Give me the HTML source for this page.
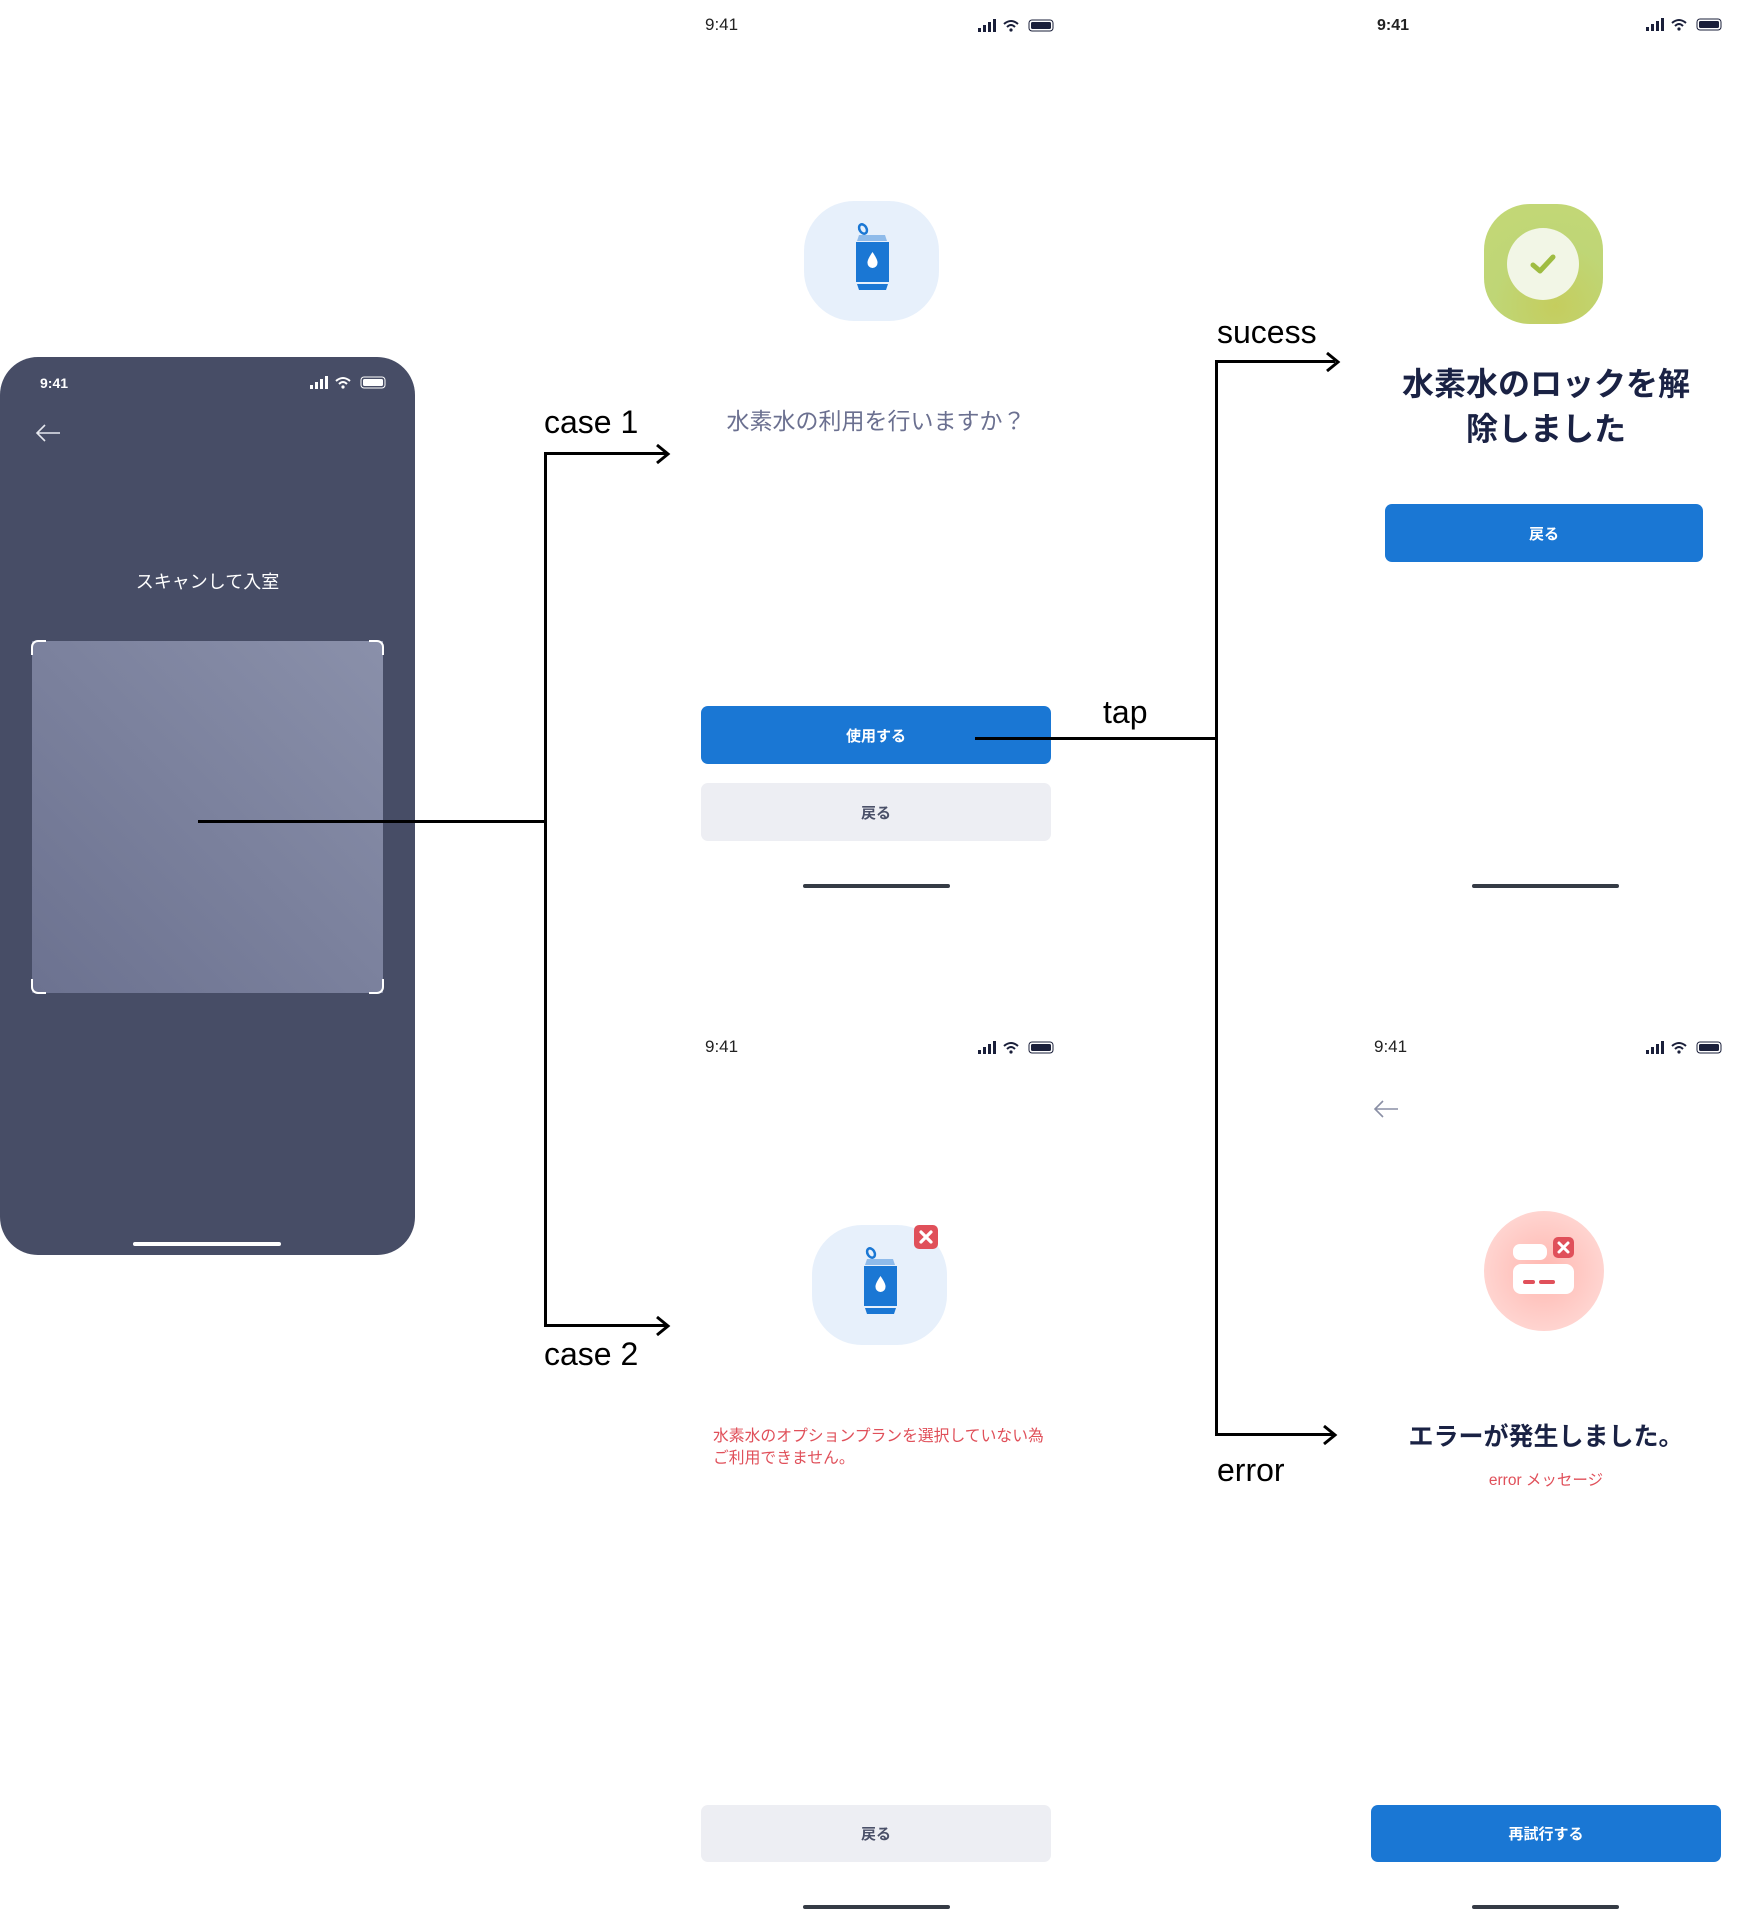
<!DOCTYPE html>
<html><head><meta charset="utf-8">
<style>
*{margin:0;padding:0;box-sizing:border-box}
body{width:1750px;height:1916px;background:#fff;position:relative;overflow:hidden;font-family:"Liberation Sans","Noto Sans CJK JP",sans-serif}
.a{position:absolute}
.t{position:absolute;white-space:nowrap}
.btn{position:absolute;border-radius:7px;display:flex;align-items:center;justify-content:center;font-size:15px;font-weight:bold}
.blue{background:#1a77d4;color:#fff}
.gray{background:#edeef3;color:#4a5068}
.home{position:absolute;width:147px;height:4px;border-radius:2px;background:#353b45}
.ln{position:absolute;background:#000}
.lbl{position:absolute;font-size:32px;color:#000;white-space:nowrap;font-family:"Liberation Sans",sans-serif}
</style></head><body>

<!-- Left dark phone -->
<div class="a" style="left:0;top:357px;width:415px;height:898px;background:#474d66;border-radius:38px"></div>
<div class="t" style="left:40px;top:375px;font-size:14px;font-weight:bold;color:#fff">9:41</div>
<svg class="a" style="left:310px;top:376px" width="78" height="14" viewBox="0 0 78 14">
<rect x="0" y="9" width="3" height="4" fill="#fff"/><rect x="5" y="6" width="3" height="7" fill="#fff"/><rect x="10" y="3" width="3" height="10" fill="#fff"/><rect x="15" y="0" width="3" height="13" fill="#fff"/>
<path d="M26 5 Q33 -1 40 5" stroke="#fff" stroke-width="2" fill="none"/><path d="M29 8 Q33 4 37 8" stroke="#fff" stroke-width="2" fill="none"/><circle cx="33" cy="11" r="1.6" fill="#fff"/>
<rect x="51" y="1" width="24" height="11" rx="3" fill="none" stroke="#fff" stroke-width="1"/><rect x="53" y="3" width="20" height="7" rx="1.5" fill="#fff"/>
</svg>
<svg class="a" style="left:34px;top:423px" width="28" height="20" viewBox="0 0 28 20"><path d="M26 10H3M11 2L3 10L11 18" stroke="#e6e8ef" stroke-width="1.6" fill="none"/></svg>
<div class="t" style="left:0;width:415px;text-align:center;top:568px;font-size:18px;color:#fff">スキャンして入室</div>
<div class="a" style="left:32px;top:641px;width:351px;height:352px;background:linear-gradient(225deg,#8a90aa,#6c7290);"></div>
<svg class="a" style="left:30px;top:639px" width="355" height="356" viewBox="0 0 355 356">
<g stroke="#fff" stroke-width="2" fill="none"><path d="M2 16V8a6 6 0 0 1 6-6H16"/><path d="M339 2H347a6 6 0 0 1 6 6V16"/><path d="M2 340V348a6 6 0 0 0 6 6H16"/><path d="M339 354H347a6 6 0 0 0 6-6V340"/></g></svg>
<div class="a" style="left:133px;top:1242px;width:148px;height:4px;border-radius:2px;background:#fff"></div>

<!-- connector lines -->
<div class="ln" style="left:198px;top:820px;width:348px;height:3px"></div>
<div class="ln" style="left:544px;top:452px;width:3px;height:875px"></div>
<div class="ln" style="left:544px;top:452px;width:122px;height:3px"></div>
<div class="ln" style="left:544px;top:1324px;width:122px;height:3px"></div>
<svg class="a" style="left:655px;top:443px" width="16" height="22"><path d="M2 2L13 11L2 20" stroke="#000" stroke-width="3" fill="none"/></svg>
<svg class="a" style="left:655px;top:1315px" width="16" height="22"><path d="M2 2L13 11L2 20" stroke="#000" stroke-width="3" fill="none"/></svg>
<div class="lbl" style="left:544px;top:404px">case 1</div>
<div class="lbl" style="left:544px;top:1336px">case 2</div>

<div class="ln" style="left:975px;top:737px;width:243px;height:3px"></div>
<div class="ln" style="left:1215px;top:360px;width:3px;height:1076px"></div>
<div class="ln" style="left:1215px;top:360px;width:120px;height:3px"></div>
<div class="ln" style="left:1215px;top:1433px;width:120px;height:3px"></div>
<svg class="a" style="left:1325px;top:351px" width="16" height="22"><path d="M2 2L13 11L2 20" stroke="#000" stroke-width="3" fill="none"/></svg>
<svg class="a" style="left:1322px;top:1424px" width="16" height="22"><path d="M2 2L13 11L2 20" stroke="#000" stroke-width="3" fill="none"/></svg>
<div class="lbl" style="left:1103px;top:694px">tap</div>
<div class="lbl" style="left:1217px;top:314px">sucess</div>
<div class="lbl" style="left:1217px;top:1452px">error</div>

<!-- status bars for white phones -->
<div class="t" style="left:705px;top:15px;font-size:17px;color:#222">9:41</div>
<div class="t" style="left:1377px;top:17px;font-size:16px;font-weight:bold;color:#222">9:41</div>
<div class="t" style="left:705px;top:1037px;font-size:17px;color:#222">9:41</div>
<div class="t" style="left:1374px;top:1037px;font-size:17px;color:#222">9:41</div>
<svg class="a" style="left:978px;top:19px" width="80" height="14" viewBox="0 0 80 14"><g fill="#1a1f3a"><rect x="0" y="9" width="3" height="4"/><rect x="5" y="6" width="3" height="7"/><rect x="10" y="3" width="3" height="10"/><rect x="15" y="0" width="3" height="13"/><circle cx="33" cy="11" r="1.6"/><rect x="53" y="3" width="20" height="7" rx="1.5"/></g><g stroke="#1a1f3a" stroke-width="2" fill="none"><path d="M26 5 Q33 -1 40 5"/><path d="M29 8 Q33 4 37 8"/></g><rect x="51" y="1" width="24" height="11" rx="3" fill="none" stroke="#1a1f3a" stroke-width="1"/></svg>
<svg class="a" style="left:1646px;top:18px" width="80" height="14" viewBox="0 0 80 14"><g fill="#1a1f3a"><rect x="0" y="9" width="3" height="4"/><rect x="5" y="6" width="3" height="7"/><rect x="10" y="3" width="3" height="10"/><rect x="15" y="0" width="3" height="13"/><circle cx="33" cy="11" r="1.6"/><rect x="53" y="3" width="20" height="7" rx="1.5"/></g><g stroke="#1a1f3a" stroke-width="2" fill="none"><path d="M26 5 Q33 -1 40 5"/><path d="M29 8 Q33 4 37 8"/></g><rect x="51" y="1" width="24" height="11" rx="3" fill="none" stroke="#1a1f3a" stroke-width="1"/></svg>
<svg class="a" style="left:978px;top:1041px" width="80" height="14" viewBox="0 0 80 14"><g fill="#1a1f3a"><rect x="0" y="9" width="3" height="4"/><rect x="5" y="6" width="3" height="7"/><rect x="10" y="3" width="3" height="10"/><rect x="15" y="0" width="3" height="13"/><circle cx="33" cy="11" r="1.6"/><rect x="53" y="3" width="20" height="7" rx="1.5"/></g><g stroke="#1a1f3a" stroke-width="2" fill="none"><path d="M26 5 Q33 -1 40 5"/><path d="M29 8 Q33 4 37 8"/></g><rect x="51" y="1" width="24" height="11" rx="3" fill="none" stroke="#1a1f3a" stroke-width="1"/></svg>
<svg class="a" style="left:1646px;top:1041px" width="80" height="14" viewBox="0 0 80 14"><g fill="#1a1f3a"><rect x="0" y="9" width="3" height="4"/><rect x="5" y="6" width="3" height="7"/><rect x="10" y="3" width="3" height="10"/><rect x="15" y="0" width="3" height="13"/><circle cx="33" cy="11" r="1.6"/><rect x="53" y="3" width="20" height="7" rx="1.5"/></g><g stroke="#1a1f3a" stroke-width="2" fill="none"><path d="M26 5 Q33 -1 40 5"/><path d="M29 8 Q33 4 37 8"/></g><rect x="51" y="1" width="24" height="11" rx="3" fill="none" stroke="#1a1f3a" stroke-width="1"/></svg>

<!-- Phone 2 top: confirm -->
<div class="a" style="left:804px;top:201px;width:135px;height:120px;background:#e7f0fb;border-radius:50px"></div>
<svg class="a" style="left:853px;top:222px" width="40" height="70" viewBox="0 0 40 70">
<ellipse cx="10" cy="7" rx="3.5" ry="5" transform="rotate(-30 10 7)" stroke="#1a77d4" stroke-width="2.5" fill="none"/>
<path d="M6 13H32L34 19H4Z" fill="#8fbbea"/><rect x="3" y="20" width="33" height="40" fill="#1a77d4"/><path d="M4 62H35L33 68H6Z" fill="#1a77d4"/>
<path d="M19.5 30 Q14 38 14.5 41 A5 5 0 0 0 24.5 41 Q25 38 19.5 30Z" fill="#fff"/></svg>
<div class="t" style="left:701px;width:350px;text-align:center;top:402px;font-size:23px;color:#6b7090">水素水の利用を行いますか？</div>
<div class="btn blue" style="left:701px;top:706px;width:350px;height:58px">使用する</div>
<div class="btn gray" style="left:701px;top:783px;width:350px;height:58px">戻る</div>
<div class="home" style="left:803px;top:884px"></div>
<div class="ln" style="left:975px;top:737px;width:76px;height:3px"></div>

<!-- Phone 3 top: success -->
<div class="a" style="left:1484px;top:204px;width:119px;height:120px;border-radius:46px;background:radial-gradient(circle at 60% 85%,#c5cd5e,#bfd676 50%,#c4d876)"></div>
<div class="a" style="left:1507px;top:228px;width:72px;height:72px;border-radius:50%;background:#f2f6e6"></div>
<svg class="a" style="left:1528px;top:251px" width="30" height="26"><path d="M5 14L12 20L25 6" stroke="#9fbc42" stroke-width="5" stroke-linecap="round" stroke-linejoin="round" fill="none"/></svg>
<div class="t" style="left:1371px;width:350px;text-align:center;top:362px;font-size:32px;font-weight:bold;line-height:45px;color:#1a2244">水素水のロックを解<br>除しました</div>
<div class="btn blue" style="left:1385px;top:504px;width:318px;height:58px">戻る</div>
<div class="home" style="left:1472px;top:884px"></div>

<!-- Phone 2 bottom: not available -->
<div class="a" style="left:812px;top:1225px;width:135px;height:120px;background:#e7f0fb;border-radius:50px"></div>
<svg class="a" style="left:861px;top:1246px" width="40" height="70" viewBox="0 0 40 70">
<ellipse cx="10" cy="7" rx="3.5" ry="5" transform="rotate(-30 10 7)" stroke="#1a77d4" stroke-width="2.5" fill="none"/>
<path d="M6 13H32L34 19H4Z" fill="#8fbbea"/><rect x="3" y="20" width="33" height="40" fill="#1a77d4"/><path d="M4 62H35L33 68H6Z" fill="#1a77d4"/>
<path d="M19.5 30 Q14 38 14.5 41 A5 5 0 0 0 24.5 41 Q25 38 19.5 30Z" fill="#fff"/></svg>
<svg class="a" style="left:914px;top:1225px" width="25" height="25"><rect x="0" y="0" width="24" height="24" rx="5" fill="#e0505a"/><path d="M7 7L17 17M17 7L7 17" stroke="#fff" stroke-width="3.2" stroke-linecap="round"/></svg>
<div class="t" style="left:713px;top:1426px;font-size:15.8px;line-height:22px;color:#e0505a">水素水のオプションプランを選択していない為<br>ご利用できません。</div>
<div class="btn gray" style="left:701px;top:1805px;width:350px;height:57px">戻る</div>
<div class="home" style="left:803px;top:1905px"></div>

<!-- Phone 3 bottom: error -->
<svg class="a" style="left:1372px;top:1098px" width="28" height="22" viewBox="0 0 28 22"><path d="M26 11H3M11 3L3 11L11 19" stroke="#8a8fa5" stroke-width="1.6" fill="none"/></svg>
<div class="a" style="left:1484px;top:1211px;width:120px;height:120px;border-radius:50%;background:radial-gradient(circle at 50% 50%,#ffb7b0,#ffd6d2 75%,#ffdcd8)"></div>
<svg class="a" style="left:1510px;top:1237px" width="70" height="60" viewBox="0 0 70 60">
<rect x="3" y="7" width="34" height="16" rx="7" fill="#fff"/><rect x="3" y="27" width="61" height="30" rx="8" fill="#fff"/>
<rect x="13" y="43" width="12" height="4" rx="2" fill="#e0505a"/><rect x="29" y="43" width="16" height="4" rx="2" fill="#e0505a"/>
<rect x="43" y="0" width="21" height="21" rx="5" fill="#e0505a"/><path d="M49 6L58 15M58 6L49 15" stroke="#fff" stroke-width="3" stroke-linecap="round"/></svg>
<div class="t" style="left:1371px;width:350px;text-align:center;top:1417px;font-size:25px;font-weight:bold;color:#1a2244">エラーが発生しました。</div>
<div class="t" style="left:1371px;width:350px;text-align:center;top:1468px;font-size:15.5px;color:#e0505a">error メッセージ</div>
<div class="btn blue" style="left:1371px;top:1805px;width:350px;height:57px">再試行する</div>
<div class="home" style="left:1472px;top:1905px"></div>
</body></html>
